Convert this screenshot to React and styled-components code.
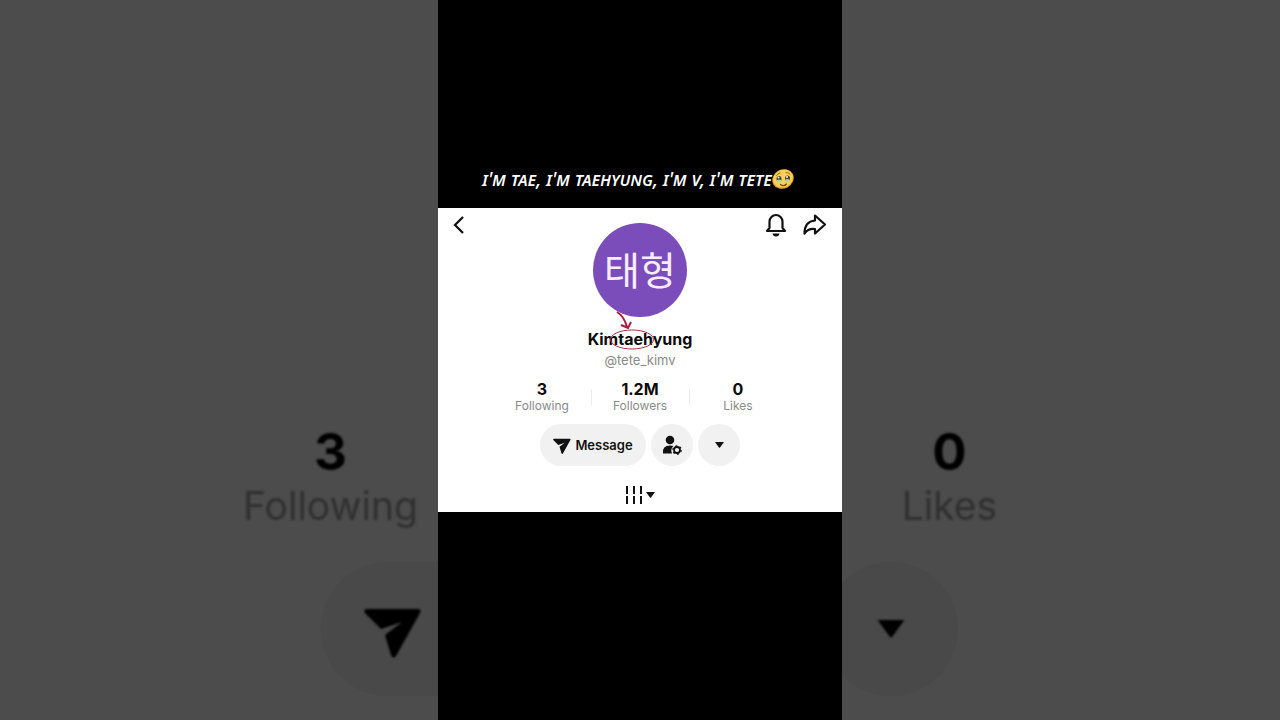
import React from "react"
import styled, { createGlobalStyle } from "styled-components"

const GlobalStyle = createGlobalStyle`
  body {
    margin: 0;
    background-color: #4c4c4c;
    font-family: Inter, "Noto Sans", "Noto Sans CJK KR", sans-serif;
  }

  button {
    display: flex;
    align-items: center;
    justify-content: center;
    padding: 0;
    border: none;
    background: none;
    color: #111;
    font-family: inherit;
    cursor: pointer;
  }

  svg {
    display: block;
    flex: none;
  }
`

const Page = styled.div`
  display: grid;
  grid-template-columns: 1fr minmax(0, 404px) 1fr;
  min-height: 100vh;
`

const Side = styled.aside`
  display: flex;
  flex-direction: column;
  justify-content: flex-end;
  align-items: ${props => props.$align};
  gap: 30px;
  padding-bottom: 24px;
  overflow: hidden;
  color: #000;

  & svg {
    filter: blur(1px);
  }
`

const SideStat = styled.div`
  width: 215px;
  text-align: center;
  filter: blur(1px);
`

const SideValue = styled.div`
  font-size: 51px;
  font-weight: 700;
  line-height: 56px;
`

const SideLabel = styled.div`
  font-size: 39px;
  line-height: 52px;
  color: #303030;
`

const SidePill = styled.div`
  display: flex;
  align-items: center;
  width: 74px;
  height: 134px;
  padding-left: 43px;
  border-radius: 67px 0 0 67px;
  background-color: #494949;
`

const SideCircle = styled.div`
  display: flex;
  align-items: center;
  justify-content: center;
  width: 134px;
  height: 134px;
  margin-left: -18px;
  border-radius: 50%;
  background-color: #494949;
`

const Story = styled.main`
  display: grid;
  grid-template-rows: 1fr auto 1fr;
  background-color: #000;
`

const Caption = styled.p`
  display: flex;
  align-self: end;
  align-items: center;
  justify-content: center;
  margin: 0 0 16px;
  padding-right: 4px;
  color: #fff;
  font-family: "Noto Sans", sans-serif;
  font-size: 19px;
  font-style: italic;
  font-variant-caps: all-small-caps;
  font-weight: 500;
  line-height: 26px;
  white-space: nowrap;
`

const Profile = styled.section`
  display: flex;
  flex-direction: column;
  align-items: center;
  padding: 5px 15px 8px;
  background-color: #fff;
`

const TopBar = styled.header`
  display: grid;
  grid-template-columns: 1fr auto 1fr;
  align-items: start;
  width: 100%;
`

const BackButton = styled.button`
  justify-self: start;
`

const TopActions = styled.div`
  display: flex;
  justify-content: flex-end;
  gap: 15px;
`

const Avatar = styled.div`
  display: flex;
  align-items: center;
  justify-content: center;
  box-sizing: border-box;
  width: 94px;
  height: 94px;
  margin-top: 10px;
  padding-bottom: 4px;
  border-radius: 50%;
  background-color: #7b4dbb;
  color: #f6ecfc;
  font-family: "Noto Sans CJK KR", sans-serif;
  font-size: 39px;
  line-height: 38px;
`

const Name = styled.h1`
  position: relative;
  margin: 11px 0 0;
  color: #0c0c0c;
  font-size: 16px;
  font-weight: 700;
  line-height: 22px;
`

const Scribble = styled.svg`
  position: absolute;
  top: -20px;
  left: 18px;
`

const Handle = styled.p`
  margin: 0;
  color: #8a8a8a;
  font-size: 13px;
  line-height: 20px;
`

const Stats = styled.div`
  display: flex;
  align-items: center;
  margin-top: 10px;
`

const Stat = styled.div`
  width: 97px;
  text-align: center;
`

const StatValue = styled.div`
  color: #0c0c0c;
  font-size: 16px;
  font-weight: 700;
  line-height: 18px;
`

const StatLabel = styled.div`
  color: #8a8a8a;
  font-size: 12px;
  line-height: 16px;
`

const Divider = styled.div`
  width: 1px;
  height: 16px;
  background-color: #ededed;
`

const Actions = styled.div`
  display: flex;
  gap: 5px;
  margin-top: 10px;
`

const ActionButton = styled.button`
  && {
    gap: 4px;
    width: ${props => (props.$wide ? "106px" : "42px")};
    height: 42px;
    border-radius: 21px;
    background-color: #f1f1f1;
    font-size: 13px;
    font-weight: 600;
  }
`

const FeedButton = styled.button`
  && {
    gap: 4px;
    height: 18px;
    margin-top: 20px;
  }
`

const PlaneIcon = ({ size }) => (
  <svg width={size} height={size} viewBox="0 -5 58 58">
    <path
      d="M3 4H54Q58 4 56 8L32 51Q29 55 27 50L21 30L38 17L17 24L1 8Q-1 4 3 4Z"
      fill="currentColor"
    />
  </svg>
)

const Caret = ({ width, height }) => (
  <svg width={width} height={height} viewBox="0 0 26 18">
    <path d="M1 0H25Q27 0 25 2L14 17Q13 18 12 17L1 2Q-1 0 1 0Z" fill="currentColor" />
  </svg>
)

const TearyFace = () => (
  <svg width="22" height="22" viewBox="0 0 44 44" role="img" aria-label="face holding back tears">
    <ellipse cx="22" cy="22" rx="22" ry="19" fill="#eda62c" transform="rotate(-28 22 22)" />
    <ellipse cx="22" cy="21" rx="20" ry="17" fill="#fad155" transform="rotate(-28 22 21)" />
    <path d="M9 15Q11 11 16 10M28 9Q33 9 36 12" stroke="#a06a1c" strokeWidth="2" fill="none" strokeLinecap="round" />
    <ellipse cx="14" cy="22" rx="5" ry="6" fill="#4a4026" />
    <ellipse cx="31" cy="21" rx="5" ry="6" fill="#4a4026" />
    <path d="M9 25Q14 21 19 25Q18 29 14 29T9 25ZM26 24Q31 20 36 24Q35 28 31 28T26 24Z" fill="#b4d4b4" />
    <circle cx="13" cy="19" r="2" fill="#fff" />
    <circle cx="30" cy="18" r="2" fill="#fff" />
    <path d="M17 33Q23 38 29 32" stroke="#7a4512" strokeWidth="2.5" fill="none" strokeLinecap="round" />
  </svg>
)

const stats = [
  { value: "3", label: "Following" },
  { value: "1.2M", label: "Followers" },
  { value: "0", label: "Likes" },
]

const App = () => (
  <>
    <GlobalStyle />
    <Page>
      <Side $align="flex-end">
        <SideStat>
          <SideValue>3</SideValue>
          <SideLabel>Following</SideLabel>
        </SideStat>
        <SidePill>
          <PlaneIcon size={58} />
        </SidePill>
      </Side>

      <Story>
        <Caption>
          I'M TAE, I'M TAEHYUNG, I'M V, I'M TETE
          <TearyFace />
        </Caption>

        <Profile>
          <TopBar>
            <BackButton type="button" aria-label="Back">
              <svg width="14" height="24" viewBox="0 0 14 24">
                <path d="M10 4L2 12L10 20" stroke="currentColor" strokeWidth="2.3" fill="none" />
              </svg>
            </BackButton>
            <Avatar>태형</Avatar>
            <TopActions>
              <button type="button" aria-label="Notifications">
                <svg width="24" height="24" viewBox="0 0 24 24">
                  <path
                    d="M3 18H21L18.5 15V8.5A6.5 6.5 0 0 0 5.5 8.5V15Z"
                    stroke="currentColor"
                    strokeWidth="2.2"
                    fill="none"
                    strokeLinejoin="round"
                  />
                  <path d="M8.5 20.5H15.5Q15 23.5 12 23.5T8.5 20.5Z" fill="currentColor" />
                </svg>
              </button>
              <button type="button" aria-label="Share">
                <svg width="24" height="24" viewBox="0 0 24 24">
                  <path
                    d="M12 2.5L22 11.5L12 20.5V16Q5.500 15 1.500 20.5Q1.500 8.500 12 7.500Z"
                    stroke="currentColor"
                    strokeWidth="2.2"
                    fill="none"
                    strokeLinejoin="round"
                  />
                </svg>
              </button>
            </TopActions>
          </TopBar>

          <Name>
            Kimtaehyung
            <Scribble width="52" height="44" viewBox="0 0 52 44" fill="none" stroke="#b01c3c">
              <path d="M11 4Q18 8 21 19M15 17L22 20L25 14" strokeWidth="2" />
              <ellipse cx="26" cy="31.5" rx="21.5" ry="9.5" stroke="#a83444" />
            </Scribble>
          </Name>
          <Handle>@tete_kimv</Handle>

          <Stats>
            {stats.map((stat, i) => (
              <React.Fragment key={stat.label}>
                {i > 0 && <Divider />}
                <Stat>
                  <StatValue>{stat.value}</StatValue>
                  <StatLabel>{stat.label}</StatLabel>
                </Stat>
              </React.Fragment>
            ))}
          </Stats>

          <Actions>
            <ActionButton type="button" $wide>
              <PlaneIcon size={18} />
              Message
            </ActionButton>
            <ActionButton type="button" aria-label="Follow settings">
              <svg width="20" height="20" viewBox="0 0 20 20">
                <circle cx="8" cy="5" r="4.3" fill="currentColor" />
                <path d="M1 18.5Q0 10.5 8 10.5Q10 10.5 11.5 11Q8 14 10 18.5Z" fill="currentColor" />
                <circle cx="15" cy="15" r="3" stroke="currentColor" strokeWidth="1.8" fill="none" />
                <circle cx="15" cy="15" r="4.2" stroke="currentColor" strokeWidth="1.2" strokeDasharray="2 2.4" fill="none" />
              </svg>
            </ActionButton>
            <ActionButton type="button" aria-label="More">
              <Caret width={9} height={6} />
            </ActionButton>
          </Actions>

          <FeedButton type="button" aria-label="Change feed view">
            <svg width="16" height="18" viewBox="0 0 16 18">
              <path d="M1 0V8M8 0V8M15 0V8M1 10V18M8 10V18M15 10V18" stroke="currentColor" strokeWidth="2" />
            </svg>
            <Caret width={9} height={6} />
          </FeedButton>
        </Profile>
      </Story>

      <Side $align="flex-start">
        <SideStat>
          <SideValue>0</SideValue>
          <SideLabel>Likes</SideLabel>
        </SideStat>
        <SideCircle>
          <Caret width={26} height={18} />
        </SideCircle>
      </Side>
    </Page>
  </>
)

export default App
